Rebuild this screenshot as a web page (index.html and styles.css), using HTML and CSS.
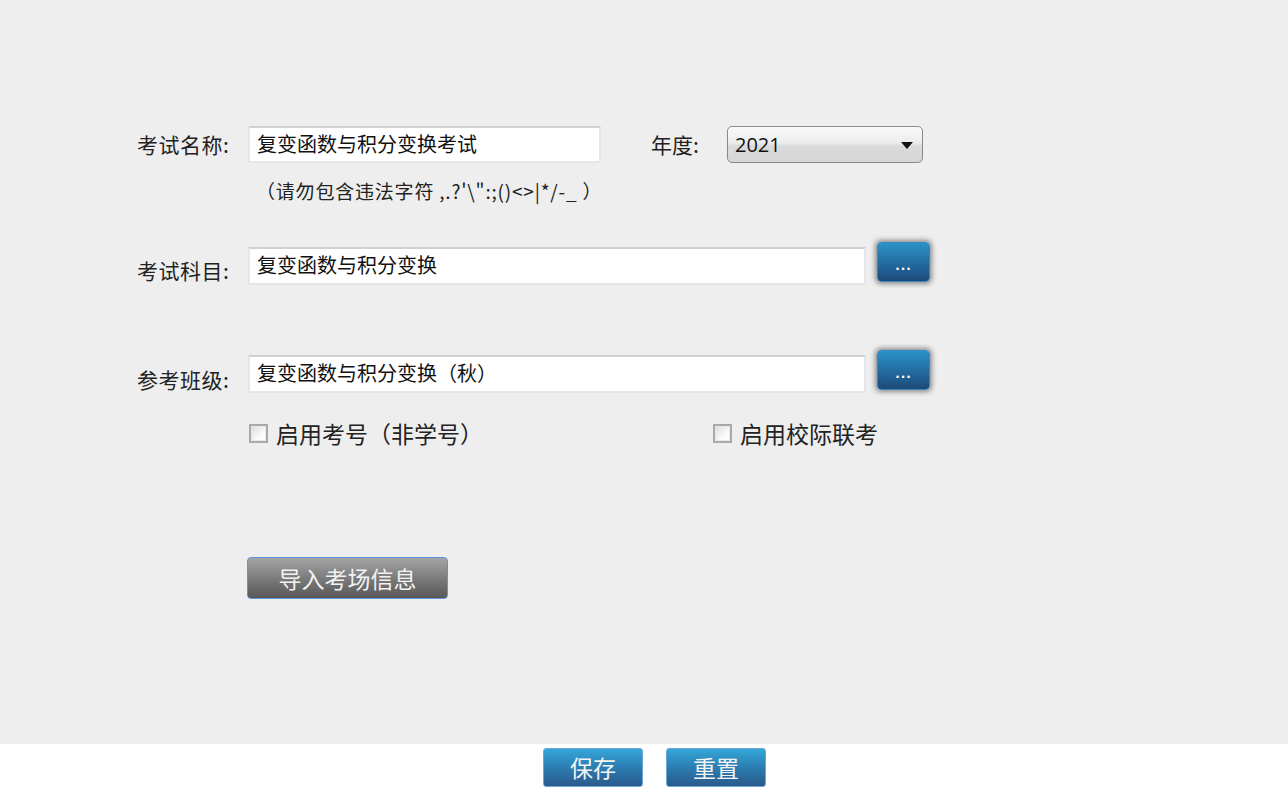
FILE: index.html
```html
<!DOCTYPE html>
<html lang="zh-CN">
<head>
<meta charset="utf-8">
<title>考试设置</title>
<link rel="stylesheet" href="styles.css">
</head>
<body>
<main class="form">
  <div class="row row-name">
    <span class="label">考试名称:</span>
    <div class="field field-short">复变函数与积分变换考试</div>
    <span class="label-year">年度:</span>
    <div class="select">
      <span>2021</span>
      <svg class="arrow" width="12" height="7" viewBox="0 0 12 7"><path d="M0 0H12L6 7Z" fill="#111"/></svg>
    </div>
  </div>
  <div class="hint">（请勿包含违法字符 ,.?'\":;()&lt;&gt;|*/-_ ）</div>
  <div class="row row-subject">
    <span class="label">考试科目:</span>
    <div class="field field-long">复变函数与积分变换</div>
    <button class="dots">...</button>
  </div>
  <div class="row row-class">
    <span class="label">参考班级:</span>
    <div class="field field-long">复变函数与积分变换（秋）</div>
    <button class="dots">...</button>
  </div>
  <div class="checks">
    <label class="check check-1"><span class="box"></span>启用考号（非学号）</label>
    <label class="check check-2"><span class="box"></span>启用校际联考</label>
  </div>
  <div class="import-row">
    <button class="import">导入考场信息</button>
  </div>
</main>
<footer class="footer">
  <button class="action">保存</button>
  <button class="action">重置</button>
</footer>
</body>
</html>
```
FILE: styles.css
```css
* { box-sizing: border-box; }
html, body { margin: 0; padding: 0; }
body {
  background: #eeeeee;
  font-family: "Noto Sans CJK SC", "Noto Sans", sans-serif;
  color: #222;
  width: 1288px;
  height: 799px;
  overflow: hidden;
}
.form {
  height: 744px;
  padding: 126px 0 0 137px;
}
.row { display: flex; align-items: flex-start; }
.label {
  width: 111px;
  font-size: 21px;
  line-height: 37px;
  color: #222;
  white-space: nowrap;
  letter-spacing: 0.5px;
}
.row-subject .label { line-height: 30px; margin-top: 8px; }
.row-class .label { line-height: 28px; margin-top: 10px; }
.field {
  height: 37px;
  background: #fff;
  border: 2px solid #e3e6ea;
  border-top-color: #cfd1d4;
  font-size: 20px;
  line-height: 32px;
  padding-left: 7px;
  color: #111;
  white-space: nowrap;
  overflow: hidden;
}
.field-short { width: 353px; }
.field-long { width: 618px; height: 38px; }
.label-year {
  margin-left: 50px;
  width: 76px;
  font-size: 21px;
  line-height: 37px;
}
.select {
  width: 196px;
  height: 37px;
  border: 1px solid #8a8a8a;
  border-radius: 5px;
  background: linear-gradient(#fafafa 0%, #ececec 45%, #dadada 55%, #d6d6d6 100%);
  display: flex;
  align-items: center;
  justify-content: space-between;
  padding: 0 9px 0 7px;
  font-family: "Open Sans", "Noto Sans", sans-serif;
  font-size: 20px;
  color: #111;
}
.arrow { margin-top: 2px; }
.hint {
  margin: 16px 0 0 111px;
  padding-left: 8px;
  font-size: 19px;
  line-height: 24px;
  color: #222;
  letter-spacing: 0.8px;
  white-space: nowrap;
}
.row-subject { margin-top: 44px; }
.row-class { margin-top: 70px; }
.dots {
  display: block;
  margin: -5px 0 0 11px;
  width: 53px;
  height: 40px;
  border: 1px solid #3a86be;
  border-radius: 4px;
  background: linear-gradient(#2a93c6 0%, #22679c 60%, #1c4a78 100%);
  box-shadow: 0 0 5px 2px rgba(60, 60, 60, 0.55);
  color: #fff;
  font-weight: bold;
  font-size: 12px;
  line-height: 1;
  padding-top: 8px;
  font-family: "DejaVu Sans", sans-serif;
  letter-spacing: 1px;
}
.checks {
  margin-top: 27px;
  display: flex;
  height: 26px;
  align-items: center;
  padding-left: 112px;
}
.check {
  display: flex;
  align-items: center;
  font-size: 23px;
  color: #222;
  line-height: 26px;
  white-space: nowrap;
}
.check-1 { width: 464px; }
.box {
  width: 19px;
  height: 19px;
  margin-right: 8px;
  border: 2px solid #a9a9a9;
  background: linear-gradient(135deg, #d6dce3 0%, #f7f8fa 60%, #ffffff 100%);
  box-shadow: inset 0 0 0 1px #e8e8e8;
}
.import-row { margin-top: 111px; padding-left: 110px; }
.import {
  display: block;
  width: 201px;
  height: 42px;
  border: 1px solid #5b94dc;
  border-radius: 4px;
  background: linear-gradient(#a4a4a4 0%, #7c7c7c 50%, #585858 100%);
  color: #f2f2f2;
  font-family: "Noto Sans CJK SC", sans-serif;
  font-size: 23px;
  line-height: 1;
  padding: 0;
}
.footer {
  height: 55px;
  background: #ffffff;
  display: flex;
  gap: 23px;
  padding: 4px 0 0 543px;
  align-items: flex-start;
}
.action {
  display: block;
  width: 100px;
  height: 39px;
  border: 1px solid #6aa7d8;
  border-radius: 3px;
  background: linear-gradient(#35a6d8 0%, #2c7db2 50%, #2a5a8c 100%);
  color: #f4f4f4;
  font-family: "Noto Sans CJK SC", sans-serif;
  font-size: 23px;
  line-height: 1;
  padding: 0;
}
```
